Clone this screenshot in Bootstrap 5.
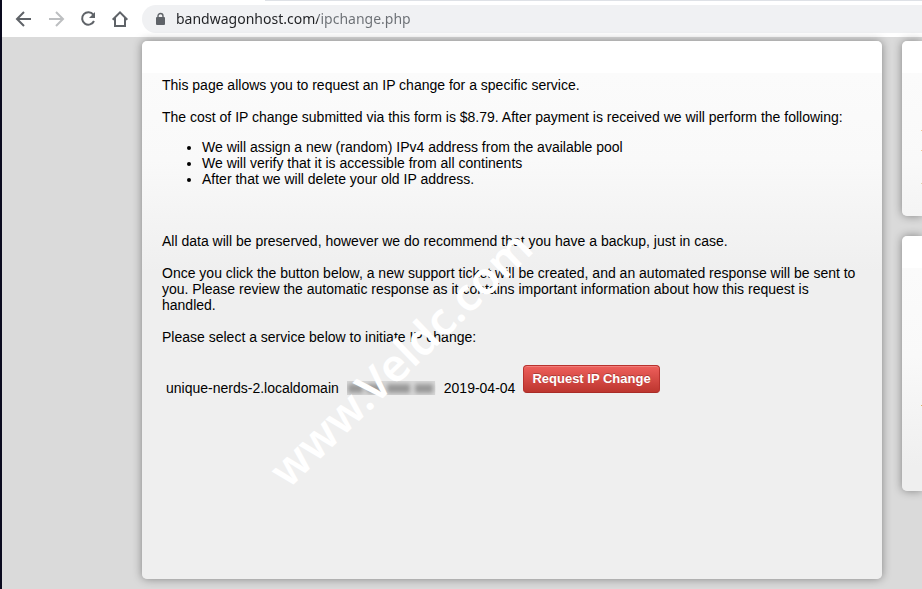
<!DOCTYPE html>
<html lang="en">
<head>
<meta charset="utf-8">
<meta name="viewport" content="width=device-width, initial-scale=1">
<title>IP change</title>
<link rel="stylesheet" href="https://cdn.jsdelivr.net/npm/bootstrap@5.3.0/dist/css/bootstrap.min.css">
<style>
:root{--sheet:linear-gradient(#fff 32px,#fbfbfb 32px,#f9f9f9 120px,#efefef 230px)}
body{background:#dadada;border-left:2px solid #0a0a1e;min-height:100vh;font:14px/16px "Liberation Sans",Arial,sans-serif;color:#000}
.toolbar{height:36px;padding-left:10px;gap:8px}
.tabstrip{height:1px;margin-left:263px;background:#dee1e6}
.tool{width:24px;height:24px;color:#5f6368}
.tool:disabled{color:#bdbfc1;opacity:1}
.omnibox{height:28px;margin-left:2px;padding-left:11px;background:#f0f1f3;border-radius:14px 0 0 14px}
.address{font:14px/24px "Noto Sans","Open Sans",sans-serif;margin-left:9px;outline:0;color:transparent;background:linear-gradient(90deg,#202124 142px,#6b6f74 142px);-webkit-background-clip:text;background-clip:text}
.page{padding:4px 0 10px 140px;gap:20px}
.panel{border-radius:5px;background:var(--sheet);box-shadow:0 0 10px rgba(0,0,0,.4)}
.content{padding:36px 20px;min-height:538px}
.content p{margin-bottom:16px}
.content ul{padding-left:40px;margin:-2px 0 46px}
.sidebar{flex:0 0 20px;gap:20px}
.sidebar .panel{border-radius:5px 0 0 5px}
.sidebar .side-short{height:175px;background:linear-gradient(#efc79a,#efc79a) 100% 89px/1px 1px no-repeat,linear-gradient(#efc79a,#efc79a) 100% 109px/1px 1px no-repeat,linear-gradient(#e0d3b0,#e0d3b0) 100% 142px/1px 1px no-repeat,var(--sheet)}
.sidebar .side-tall{height:255px;background:linear-gradient(#dfb46a,#dfb46a) 100% 169px/1px 1px no-repeat,var(--sheet)}
.service{margin-top:20px}
.service td{padding:15px 4px 0;vertical-align:top}
.service td:last-child{padding-top:0}
.redacted{width:89px;height:14px;display:block;margin-top:1px}
.btn-request{font:bold 13px/18px "Liberation Sans",Arial,sans-serif;color:#fff;padding:4px 8px;border:1px solid #b8322e;border-bottom-color:#a92b27;border-radius:4px;background:linear-gradient(#ee5f5b,#bd362f);text-shadow:0 -1px 0 rgba(0,0,0,.25);box-shadow:inset 0 1px 0 rgba(255,255,255,.2)}
.watermark{left:258px;top:317px;transform:translate(-50%,-50%) rotate(-44deg);font:600 45px/48px "Noto Sans","Open Sans",sans-serif;color:#fff;pointer-events:none;white-space:nowrap}
</style>
<script src="https://cdn.jsdelivr.net/npm/bootstrap@5.3.0/dist/js/bootstrap.bundle.min.js"></script>
</head>
<body>
<header class="bg-white">
  <div class="tabstrip"></div>
  <nav class="toolbar d-flex align-items-center" aria-label="Browser">
    <button class="tool btn border-0 p-0 d-flex" aria-label="Back"><svg width="24" height="24" viewBox="0 0 24 24" fill="none" stroke="currentColor" stroke-width="2"><path d="M19 12H6M12 5l-7 7 7 7"/></svg></button>
    <button class="tool btn border-0 p-0 d-flex" aria-label="Forward" disabled><svg width="24" height="24" viewBox="0 0 24 24" fill="none" stroke="currentColor" stroke-width="2"><path d="M5 12h13M12 5l7 7-7 7"/></svg></button>
    <button class="tool btn border-0 p-0 d-flex" aria-label="Reload"><svg width="24" height="24" viewBox="0 0 24 24" fill="none" stroke="currentColor" stroke-width="2"><path d="M17.3 7.7A6.2 6.2 0 1 0 18 14"/><path d="M19 5v6h-6z" fill="currentColor" stroke="none"/></svg></button>
    <button class="tool btn border-0 p-0 d-flex" aria-label="Home"><svg width="24" height="24" viewBox="0 0 24 24" fill="none" stroke="currentColor" stroke-width="2"><path d="M4.7 12.7L12 5.4l7.3 7.3M7 11v8h10v-8" /></svg></button>
    <div class="omnibox d-flex align-items-center flex-grow-1">
      <svg width="14" height="14" viewBox="0 0 14 14" fill="#5f6368" aria-hidden="true"><rect x="3" y="5" width="9" height="8" rx="1"/><path d="M5 6V4a2.5 2.5 0 0 1 5 0v2" fill="none" stroke="#5f6368" stroke-width="1.4"/></svg>
      <input class="address border-0 p-0 flex-grow-1" type="text" aria-label="Address" value="bandwagonhost.com/ipchange.php">
    </div>
  </nav>
</header>
<div class="page d-flex align-items-start">
  <main class="panel content flex-grow-1 position-relative">
    <p>This page allows you to request an IP change for a specific service.</p>
    <p>The cost of IP change submitted via this form is $8.79. After payment is received we will perform the following:</p>
    <ul>
      <li>We will assign a new (random) IPv4 address from the available pool</li>
      <li>We will verify that it is accessible from all continents</li>
      <li>After that we will delete your old IP address.</li>
    </ul>
    <p>All data will be preserved, however we do recommend that you have a backup, just in case.</p>
    <p>Once you click the button below, a new support ticket will be created, and an automated response will be sent to you. Please review the automatic response as it contains important information about how this request is handled.</p>
    <p>Please select a service below to initiate IP change:</p>
    <table class="service">
      <tr>
        <td>unique-nerds-2.localdomain</td>
        <td><svg class="redacted" viewBox="0 0 89 14" role="img" aria-label="Hidden address"><defs><filter id="soft" x="-10%" y="-40%" width="120%" height="180%"><feGaussianBlur stdDeviation="2"/></filter></defs><rect width="88" height="14" fill="#d8d8d8"/><g fill="#999" filter="url(#soft)"><rect x="1" y="3" width="15" height="9"/><rect x="20" y="3" width="15" height="9"/><rect x="40" y="3" width="23" height="9"/><rect x="68" y="3" width="18" height="9"/></g></svg></td>
        <td>2019-04-04</td>
        <td><button type="button" class="btn btn-request">Request IP Change</button></td>
      </tr>
    </table>
    <div class="watermark position-absolute" aria-hidden="true">www.Veldc.com</div>
  </main>
  <aside class="sidebar d-flex flex-column">
    <div class="panel side-short"></div>
    <div class="panel side-tall"></div>
  </aside>
</div>
</body>
</html>
